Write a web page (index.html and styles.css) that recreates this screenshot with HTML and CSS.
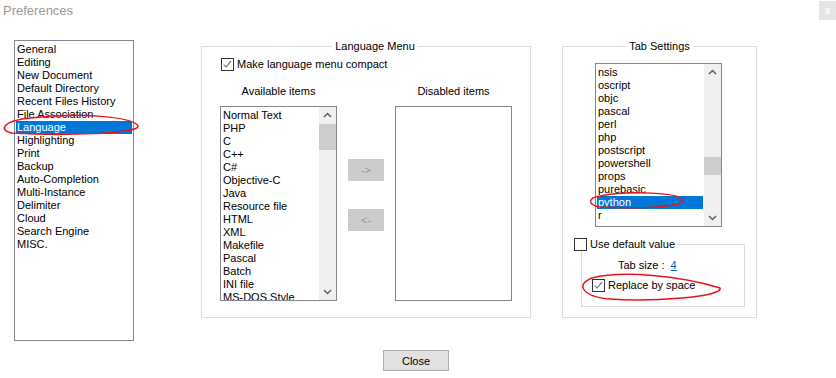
FILE: index.html
```html
<!DOCTYPE html>
<html lang="en">
<head>
    <meta charset="UTF-8">
    <meta name="viewport" content="width=device-width, initial-scale=1.0">
    <title>Preferences</title>
    <link rel="stylesheet" href="styles.css">
</head>
<body>
    <div class="window">
        <div class="titlebar">
            <span class="title">Preferences</span>
            <span class="winclose">x</span>
        </div>

        <div class="main">
            <ul class="nav">
                <li>General</li>
                <li>Editing</li>
                <li>New Document</li>
                <li>Default Directory</li>
                <li>Recent Files History</li>
                <li>File Association</li>
                <li class="selected">Language</li>
                <li>Highlighting</li>
                <li>Print</li>
                <li>Backup</li>
                <li>Auto-Completion</li>
                <li>Multi-Instance</li>
                <li>Delimiter</li>
                <li>Cloud</li>
                <li>Search Engine</li>
                <li>MISC.</li>
            </ul>

            <div class="group lang">
                <div class="group-title">Language Menu</div>
                <label class="check-row compact">
                    <span class="box checked"><svg viewBox="0 0 13 13"><polyline points="2,6.5 4.8,9.5 10.5,2.5" /></svg></span>
                    Make language menu compact
                </label>
                <div class="columns">
                    <div class="col">
                        <div class="col-head">Available items</div>
                        <div class="listbox avail">
                            <ul class="items">
                                <li>Normal Text</li>
                                <li>PHP</li>
                                <li>C</li>
                                <li>C++</li>
                                <li>C#</li>
                                <li>Objective-C</li>
                                <li>Java</li>
                                <li>Resource file</li>
                                <li>HTML</li>
                                <li>XML</li>
                                <li>Makefile</li>
                                <li>Pascal</li>
                                <li>Batch</li>
                                <li>INI file</li>
                                <li>MS-DOS Style</li>
                            </ul>
                            <div class="scroll">
                                <span class="arrow"><svg viewBox="0 0 17 17"><polyline points="5,10 8.5,6.5 12,10" /></svg></span>
                                <span class="track"><span class="thumb avail-thumb"></span></span>
                                <span class="arrow"><svg viewBox="0 0 17 17"><polyline points="5,7 8.5,10.5 12,7" /></svg></span>
                            </div>
                        </div>
                    </div>
                    <div class="movers">
                        <button class="move">-&gt;</button>
                        <button class="move">&lt;-</button>
                    </div>
                    <div class="col">
                        <div class="col-head">Disabled items</div>
                        <div class="listbox disabled"></div>
                    </div>
                </div>
            </div>

            <div class="group tabs">
                <div class="group-title">Tab Settings</div>
                <div class="listbox tablist">
                    <ul class="items">
                        <li>nsis</li>
                        <li>oscript</li>
                        <li>objc</li>
                        <li>pascal</li>
                        <li>perl</li>
                        <li>php</li>
                        <li>postscript</li>
                        <li>powershell</li>
                        <li>props</li>
                        <li>purebasic</li>
                        <li class="selected">python</li>
                        <li>r</li>
                        <li>rc</li>
                    </ul>
                    <div class="scroll">
                        <span class="arrow"><svg viewBox="0 0 17 17"><polyline points="5,10 8.5,6.5 12,10" /></svg></span>
                        <span class="track"><span class="thumb tab-thumb"></span></span>
                        <span class="arrow"><svg viewBox="0 0 17 17"><polyline points="5,7 8.5,10.5 12,7" /></svg></span>
                    </div>
                </div>
                <div class="subgroup">
                    <label class="check-row subgroup-title">
                        <span class="box"></span>
                        Use default value
                    </label>
                    <div class="tabsize">Tab size :&nbsp; <a href="#">4</a></div>
                    <label class="check-row replace">
                        <span class="box checked"><svg viewBox="0 0 13 13"><polyline points="2,6.5 4.8,9.5 10.5,2.5" /></svg></span>
                        Replace by space
                    </label>
                </div>
            </div>
        </div>

        <div class="footer">
            <button class="close">Close</button>
        </div>

        <!-- red pen marks drawn over the screenshot -->
        <svg class="marks" viewBox="0 0 836 378">
            <path d="M30 118 C80 112, 134 117, 138 126 C140 134, 60 136, 12 133 C-1 131, 1 121, 30 118" />
            <path d="M600 196 C630 190, 680 193, 683 200 C685 207, 640 209, 600 207 C588 205, 587 198, 600 196" />
            <path d="M592 278 C622 270, 682 276, 720 288 C724 297, 650 302, 610 299 C584 297, 574 285, 592 278" />
        </svg>
    </div>
</body>
</html>
```

FILE: styles.css
```css
* {
    box-sizing: border-box;
}
body {
    margin: 0;
    background-color: #fff;
    font-family: "Liberation Sans", Arial, sans-serif;
    font-size: 11px;
    line-height: 13px;
    color: #000;
}
ul {
    list-style: none;
    margin: 0;
}
.window {
    position: relative;
    width: 836px;
    height: 378px;
    overflow: hidden;
}
.titlebar {
    height: 22px;
    display: flex;
    justify-content: space-between;
    align-items: flex-start;
}
.title {
    margin: 3px 0 0 3px;
    font-size: 13px;
    line-height: 16px;
    color: #9a9a9a;
}
.winclose {
    width: 17px;
    height: 19px;
    margin-top: 1px;
    background-color: #e5e5e5;
    color: #fff;
    font-size: 10px;
    line-height: 19px;
    text-align: center;
    font-weight: bold;
}
.main {
    display: flex;
    align-items: flex-start;
    padding: 18px 0 0 14px;
}
.nav {
    width: 120px;
    height: 301px;
    padding: 2px 1px 1px;
    border: 1px solid #828790;
}
.nav li,
.items li {
    padding: 0 1px;
    height: 13px;
    white-space: nowrap;
}
li.selected {
    background-color: #0078d7;
    color: #fff;
}
.group {
    border: 1px solid #dcdcdc;
    margin-top: 6px;
    height: 272px;
}
.group-title {
    display: table;
    margin: -7px auto 0;
    padding: 0 3px;
    background-color: #fff;
}
.lang {
    width: 330px;
    margin-left: 67px;
    padding-left: 18px;
}
.tabs {
    width: 195px;
    margin-left: 31px;
}
.check-row {
    display: flex;
    align-items: center;
    gap: 3px;
    height: 13px;
}
.box {
    width: 13px;
    height: 13px;
    border: 1px solid #333;
    background-color: #fff;
    flex: none;
}
.box svg {
    display: block;
    width: 11px;
    height: 11px;
    fill: none;
    stroke: #666;
    stroke-width: 1.2;
}
.compact {
    margin: 5px 0 0 1px;
}
.columns {
    display: flex;
    align-items: flex-start;
    margin-top: 14px;
}
.col {
    width: 117px;
}
.col-head {
    text-align: center;
    margin-bottom: 8px;
}
.listbox {
    border: 1px solid #828790;
    display: flex;
    background-color: #fff;
}
.avail,
.disabled {
    height: 195px;
}
.items {
    flex: 1;
    padding: 2px 1px 1px;
    overflow: hidden;
}
.scroll {
    width: 17px;
    display: flex;
    flex-direction: column;
    background-color: #f0f0f0;
}
.arrow {
    height: 17px;
    flex: none;
}
.arrow svg {
    display: block;
    width: 17px;
    height: 17px;
    fill: none;
    stroke: #606060;
    stroke-width: 1.5;
}
.track {
    flex: 1;
}
.thumb {
    display: block;
    background-color: #cdcdcd;
}
.avail-thumb {
    height: 26px;
}
.tab-thumb {
    margin-top: 76px;
    height: 18px;
}
.movers {
    width: 36px;
    margin: 0 11px;
    padding-top: 74px;
    display: flex;
    flex-direction: column;
    gap: 28px;
}
.move {
    height: 22px;
    border: 1px solid #cccccc;
    background-color: #cccccc;
    color: #999;
    font-family: "Liberation Sans", Arial, sans-serif;
    font-size: 11px;
    padding: 0;
}
.tablist {
    width: 127px;
    height: 164px;
    margin: 10px 0 0 32px;
}
.subgroup {
    border: 1px solid #dcdcdc;
    margin: 17px 11px 0 18px;
    padding-bottom: 14px;
}
.subgroup-title {
    width: max-content;
    margin: -7px 0 0 -8px;
    padding-right: 3px;
    background-color: #fff;
}
.tabsize {
    margin: 8px 0 0 36px;
}
.tabsize a {
    color: #0066cc;
}
.replace {
    margin: 7px 0 0 10px;
}
.footer {
    display: flex;
    justify-content: center;
    padding-right: 4px;
    margin-top: 9px;
}
.close {
    width: 66px;
    height: 21px;
    border: 1px solid #adadad;
    background-color: #e1e1e1;
    font-family: "Liberation Sans", Arial, sans-serif;
    font-size: 11px;
    color: #000;
    padding: 0;
}
.marks {
    position: absolute;
    left: 0;
    top: 0;
    width: 836px;
    height: 378px;
    pointer-events: none;
}
.marks path {
    fill: none;
    stroke: #e8141c;
    stroke-width: 1.5;
}
```
